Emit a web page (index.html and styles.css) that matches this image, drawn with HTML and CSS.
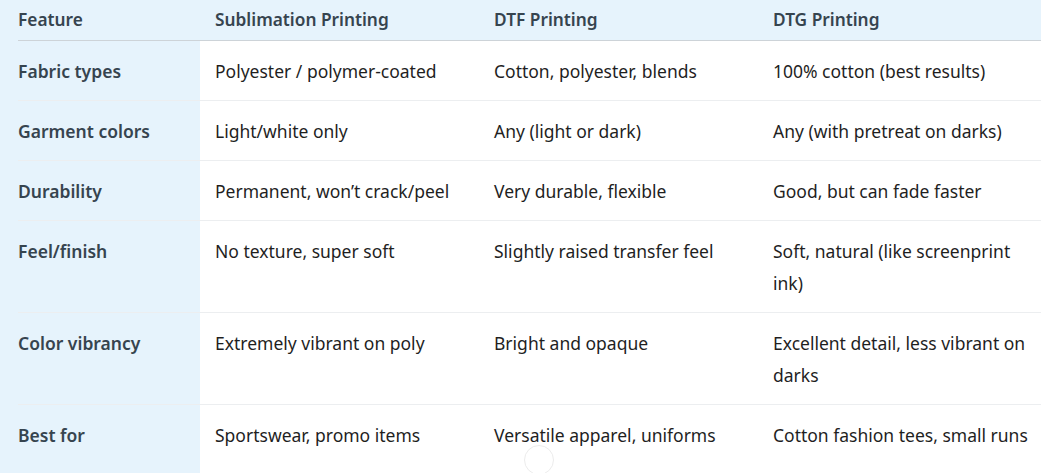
FILE: index.html
```html
<!DOCTYPE html>
<html>
<head>
<meta charset="utf-8">
<link rel="stylesheet" href="styles.css">
</head>
<body>
<div class="wrap">
  <table class="cmp">
    <colgroup>
      <col class="c1"><col class="c2"><col class="c3"><col class="c4">
    </colgroup>
    <thead>
      <tr><th>Feature</th><th>Sublimation Printing</th><th>DTF Printing</th><th>DTG Printing</th></tr>
    </thead>
    <tbody>
      <tr><td>Fabric types</td><td>Polyester / polymer-coated</td><td>Cotton, polyester, blends</td><td>100% cotton (best results)</td></tr>
      <tr><td>Garment colors</td><td>Light/white only</td><td>Any (light or dark)</td><td>Any (with pretreat on darks)</td></tr>
      <tr><td>Durability</td><td>Permanent, won’t crack/peel</td><td>Very durable, flexible</td><td>Good, but can fade faster</td></tr>
      <tr><td>Feel/finish</td><td>No texture, super soft</td><td>Slightly raised transfer feel</td><td>Soft, natural (like screenprint ink)</td></tr>
      <tr><td>Color vibrancy</td><td>Extremely vibrant on poly</td><td>Bright and opaque</td><td>Excellent detail, less vibrant on darks</td></tr>
      <tr><td>Best for</td><td>Sportswear, promo items</td><td>Versatile apparel, uniforms</td><td>Cotton fashion tees, small runs</td></tr>
    </tbody>
  </table>
  <div class="spinner"></div>
</div>
</body>
</html>
```

FILE: styles.css
```css
html, body {
  margin: 0;
  padding: 0;
  background: #ffffff;
}
body {
  font-family: "Noto Sans", "Open Sans", sans-serif;
  font-size: 17.5px;
  color: #1f1f1f;
}
.wrap {
  position: relative;
  width: 1049px;
  height: 473px;
  overflow: hidden;
  box-sizing: border-box;
  padding: 0 8px 0 18px;
  background: linear-gradient(to right, #e6f3fc 0, #e6f3fc 200px, #ffffff 200px);
}
.cmp {
  width: 1023px;
  border-collapse: collapse;
  table-layout: fixed;
}
.c1 { width: 182px; }
.c2 { width: 279px; }
.c3 { width: 279px; }
.c4 { width: 283px; }
.cmp thead th {
  background: #e6f3fc;
  text-align: left;
  font-weight: 600;
  font-size: 17.3px;
  color: #36444f;
  height: 40px;
  padding: 0 15px;
  line-height: 24px;
  border-bottom: 1px solid #cdd3d8;
  vertical-align: middle;
}
.cmp td {
  padding: 14px 15px 13px;
  line-height: 32px;
  vertical-align: top;
  border-bottom: 1px solid #eceef0;
}
.cmp tbody tr:last-child td {
  border-bottom: none;
}
.cmp td:first-child,
.cmp th:first-child {
  padding-left: 0;
}
.cmp td:last-child,
.cmp th:last-child {
  padding-right: 4px;
}
.cmp td:first-child {
  font-weight: 600;
  color: #36444f;
}
.spinner {
  position: absolute;
  left: 524px;
  top: 445px;
  width: 28px;
  height: 28px;
  border: 1px solid #ececec;
  border-radius: 50%;
}
```
